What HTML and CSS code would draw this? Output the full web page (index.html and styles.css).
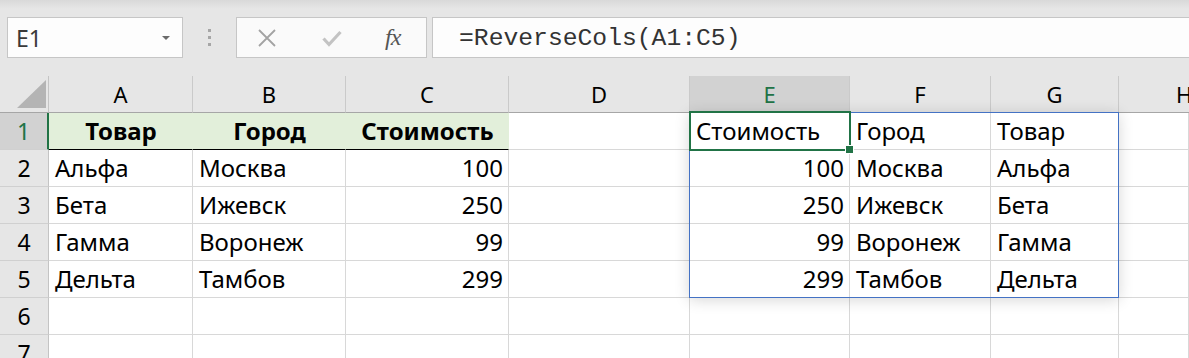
FILE: index.html
```html
<!DOCTYPE html>
<html lang="ru">
<head>
  <meta charset="UTF-8" />
  <meta name="viewport" content="width=device-width, initial-scale=1" />
  <title>ReverseCols</title>
  <link rel="stylesheet" href="styles.css">
</head>
<body>
<header class="toolbar">
  <div class="namebox">
    <span>E1</span>
    <span class="caret"></span>
  </div>
  <div class="grip"><i></i><i></i><i></i></div>
  <div class="fxbox">
    <svg class="ico-x" width="18" height="18" viewBox="0 0 18 18">
      <path d="M1 1 L17 17 M17 1 L1 17" stroke="#a3a3a3" stroke-width="1.8" fill="none"/>
    </svg>
    <svg class="ico-ok" width="20" height="17" viewBox="0 0 20 17">
      <path d="M1.5 8.5 L7 14.5 L18.5 2" stroke="#c3c3c3" stroke-width="3.2" fill="none"/>
    </svg>
    <span class="fx">fx</span>
  </div>
  <div class="formula">=ReverseCols(A1:C5)</div>
</header>

<main class="sheet">
  <div class="cells">
    <div class="corner"></div>
    <div class="hd">A</div>
    <div class="hd">B</div>
    <div class="hd">C</div>
    <div class="hd">D</div>
    <div class="hd hd-sel">E</div>
    <div class="hd">F</div>
    <div class="hd">G</div>
    <div class="hd hd-h">H</div>

    <div class="rh rh-sel">1</div>
    <div class="c title">Товар</div>
    <div class="c title">Город</div>
    <div class="c title">Стоимость</div>
    <div class="c"></div>
    <div class="c">Стоимость</div>
    <div class="c">Город</div>
    <div class="c">Товар</div>
    <div class="c"></div>

    <div class="rh">2</div>
    <div class="c">Альфа</div>
    <div class="c">Москва</div>
    <div class="c num">100</div>
    <div class="c"></div>
    <div class="c num">100</div>
    <div class="c">Москва</div>
    <div class="c">Альфа</div>
    <div class="c"></div>

    <div class="rh">3</div>
    <div class="c">Бета</div>
    <div class="c">Ижевск</div>
    <div class="c num">250</div>
    <div class="c"></div>
    <div class="c num">250</div>
    <div class="c">Ижевск</div>
    <div class="c">Бета</div>
    <div class="c"></div>

    <div class="rh">4</div>
    <div class="c">Гамма</div>
    <div class="c">Воронеж</div>
    <div class="c num">99</div>
    <div class="c"></div>
    <div class="c num">99</div>
    <div class="c">Воронеж</div>
    <div class="c">Гамма</div>
    <div class="c"></div>

    <div class="rh">5</div>
    <div class="c">Дельта</div>
    <div class="c">Тамбов</div>
    <div class="c num">299</div>
    <div class="c"></div>
    <div class="c num">299</div>
    <div class="c">Тамбов</div>
    <div class="c">Дельта</div>
    <div class="c"></div>

    <div class="rh">6</div>
    <div class="c"></div><div class="c"></div><div class="c"></div><div class="c"></div>
    <div class="c"></div><div class="c"></div><div class="c"></div><div class="c"></div>

    <div class="rh">7</div>
    <div class="c"></div><div class="c"></div><div class="c"></div><div class="c"></div>
    <div class="c"></div><div class="c"></div><div class="c"></div><div class="c"></div>
  </div>

  <!-- spill range and active cell drawn over the grid -->
  <div class="marks">
    <div class="spill"></div>
    <div class="active"><i class="handle"></i></div>
  </div>
</main>
</body>
</html>
```

FILE: styles.css
```css
:root {
  --xl-green: #217346;
  --grid: #d8d8d8;
  --head: #e6e6e6;
  --head-sel: #d2d2d2;
  --fill: #e2efda;
  --spill: #4472c4;
}
body {
  margin: 0;
  width: 1189px;
  height: 358px;
  overflow: hidden;
  background: #ffffff;
  font-family: 'Noto Sans', 'Open Sans', sans-serif;
  color: #000;
}

/* formula bar */
.toolbar {
  height: 76px;
  box-sizing: border-box;
  display: flex;
  align-items: flex-start;
  padding: 17px 0 0 7px;
  background: linear-gradient(#d9d9d9, #e6e6e6 9px);
}
.namebox {
  width: 176px;
  height: 41px;
  box-sizing: border-box;
  border: 1px solid #c6c6c6;
  background: #fdfdfd;
  display: flex;
  align-items: center;
  justify-content: space-between;
  padding: 0 12px 0 8px;
  font-size: 23px;
  color: #3a3a3a;
}
.caret {
  width: 0;
  height: 0;
  border-left: 4px solid transparent;
  border-right: 4px solid transparent;
  border-top: 4px solid #6b6b6b;
  margin-top: 1px;
}
.grip {
  margin: 12px 0 0 25px;
  width: 3px;
  display: flex;
  flex-direction: column;
  gap: 4px;
}
.grip i {
  display: block;
  width: 3px;
  height: 3px;
  background: #a6a6a6;
}
.fxbox {
  margin-left: 25px;
  width: 191px;
  height: 41px;
  box-sizing: border-box;
  border: 1px solid #c6c6c6;
  background: #fafafa;
  display: flex;
  align-items: center;
  padding-left: 21px;
}
.ico-x { display: block; margin-top: 1px; }
.ico-ok { display: block; margin-left: 46px; margin-top: 1px; }
.fx {
  margin-left: 43px;
  font-family: 'Liberation Serif', serif;
  font-style: italic;
  font-size: 24px;
  color: #555;
  letter-spacing: -1px;
}
.formula {
  margin-left: 5px;
  flex: 1;
  height: 41px;
  box-sizing: border-box;
  border: 1px solid #c6c6c6;
  border-right: none;
  background: #fdfdfd;
  padding-left: 26px;
  font-family: 'Liberation Mono', monospace;
  font-size: 24.7px;
  line-height: 40px;
  color: #333;
}

/* worksheet */
.sheet {
  display: grid;
}
.cells,
.marks {
  grid-area: 1 / 1;
  display: grid;
  grid-template-columns: 49px 144px 153px 163px 181px 160px 141px 128px 70px;
  grid-auto-rows: 37px;
}
.cells > div {
  box-sizing: border-box;
  white-space: nowrap;
  overflow: hidden;
}
.corner {
  background: var(--head);
  border-right: 1px solid #c4c4c4;
  border-bottom: 1px solid #a6a6a6;
  position: relative;
}
.corner::after {
  content: "";
  position: absolute;
  left: 17px;
  top: 4px;
  width: 29px;
  height: 28px;
  background: #b4b4b4;
  clip-path: polygon(100% 0, 100% 100%, 0 100%);
}
.hd {
  background: var(--head);
  border-right: 1px solid #cacaca;
  border-bottom: 1px solid #a6a6a6;
  text-align: center;
  font-size: 22px;
  line-height: 36px;
}
.hd-sel {
  background: var(--head-sel);
  color: var(--xl-green);
}
.hd-h {
  text-align: left;
  padding-left: 57px;
  border-right: none;
}
.rh {
  background: var(--head);
  border-right: 1px solid #c4c4c4;
  border-bottom: 1px solid #d0d0d0;
  text-align: center;
  font-size: 23px;
  line-height: 37px;
}
.rh-sel {
  background: var(--head-sel);
  color: var(--xl-green);
  border-right: 2px solid var(--xl-green);
}
.c {
  border-right: 1px solid var(--grid);
  border-bottom: 1px solid var(--grid);
  padding: 0 5px 0 6px;
  font-size: 24px;
  line-height: 36px;
}
.num {
  text-align: right;
}
.title {
  background: var(--fill);
  border-right-color: var(--fill);
  border-bottom-color: #000;
  font-weight: 700;
  text-align: center;
}

.marks {
  pointer-events: none;
}
.spill {
  grid-column: 6 / 9;
  grid-row: 2 / 7;
  margin: -1px 0 0 -1px;
  border: 1px solid var(--spill);
  box-shadow: 0 2px 14px rgba(0, 0, 0, 0.16);
}
.active {
  grid-column: 6 / 7;
  grid-row: 2 / 3;
  margin: -2px -1px -1px -1px;
  border: 2px solid var(--xl-green);
  position: relative;
}
.handle {
  position: absolute;
  right: -5px;
  bottom: -5px;
  width: 7px;
  height: 7px;
  background: var(--xl-green);
  border: 1px solid #fff;
}
```
